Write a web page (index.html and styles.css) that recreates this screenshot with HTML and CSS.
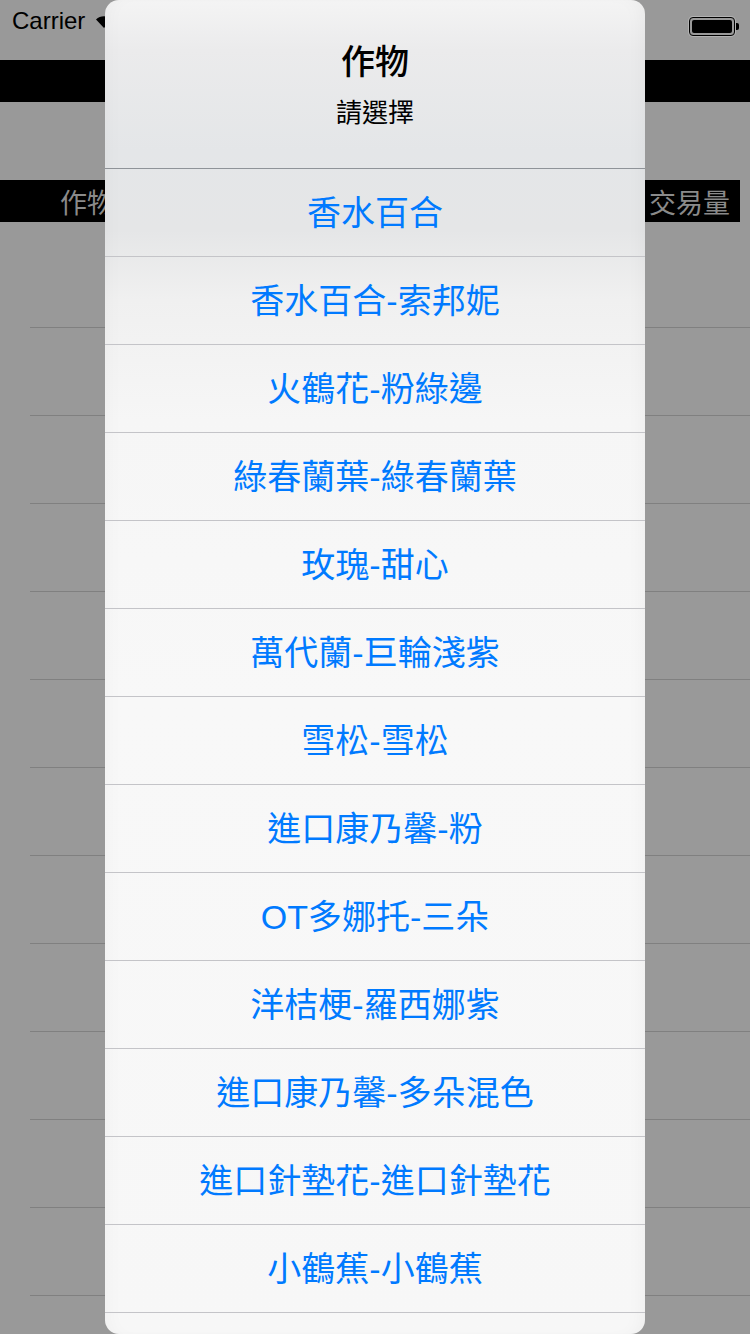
FILE: index.html
```html
<!DOCTYPE html>
<html lang="zh-Hant">
<head>
<meta charset="utf-8">
<title>作物</title>
<link rel="stylesheet" href="styles.css">
</head>
<body>
<div class="screen">
  <div class="page">
    <div class="statusbar">
      <span class="carrier">Carrier</span>
      <svg class="wifi" width="18" height="14" viewBox="0 0 18 14"><path d="M9 13 L1 4.5 A11.5 11.5 0 0 1 17 4.5 Z" fill="#000"/></svg>
      <span class="spacer"></span>
      <span class="battery"><span class="battery-fill"></span></span>
      <span class="battery-nub"></span>
    </div>
    <div class="navbar"></div>
    <div class="table-head">
      <span class="col-name">作物</span>
      <span class="col-vol">交易量</span>
    </div>
    <div class="rows">
      <div class="row first"></div>
      <div class="row"></div><div class="row"></div><div class="row"></div>
      <div class="row"></div><div class="row"></div><div class="row"></div>
      <div class="row"></div><div class="row"></div><div class="row"></div>
      <div class="row"></div><div class="row"></div>
    </div>
  </div>

  <div class="alert">
    <div class="alert-head">
      <div class="alert-title">作物</div>
      <div class="alert-msg">請選擇</div>
    </div>
    <div class="alert-list">
      <div class="item">香水百合</div>
      <div class="item">香水百合-索邦妮</div>
      <div class="item">火鶴花-粉綠邊</div>
      <div class="item">綠春蘭葉-綠春蘭葉</div>
      <div class="item">玫瑰-甜心</div>
      <div class="item">萬代蘭-巨輪淺紫</div>
      <div class="item">雪松-雪松</div>
      <div class="item">進口康乃馨-粉</div>
      <div class="item">OT多娜托-三朵</div>
      <div class="item">洋桔梗-羅西娜紫</div>
      <div class="item">進口康乃馨-多朵混色</div>
      <div class="item">進口針墊花-進口針墊花</div>
      <div class="item">小鶴蕉-小鶴蕉</div>
    </div>
  </div>
</div>
</body>
</html>
```

FILE: styles.css
```css
* { box-sizing: border-box; }
html, body {
  margin: 0;
  padding: 0;
  width: 750px;
  height: 1334px;
  overflow: hidden;
  background: #999999;
  font-family: "Liberation Sans", "Noto Sans CJK TC", sans-serif;
}
.screen {
  position: relative;
  width: 750px;
  height: 1334px;
  overflow: hidden;
}
.page {
  display: flex;
  flex-direction: column;
  width: 750px;
  height: 1334px;
  background: #999999;
}
.statusbar {
  height: 60px;
  display: flex;
  align-items: flex-start;
  padding: 6px 0 0 12px;
}
.carrier {
  font-size: 24px;
  line-height: 30px;
  color: #000;
}
.wifi {
  margin: 9px 0 0 10px;
}
.spacer { flex: 1; }
.battery {
  margin-top: 11px;
  width: 46px;
  height: 19px;
  border: 1.5px solid #000;
  border-radius: 4px;
  padding: 2px;
  display: flex;
  box-shadow: 0 0 0 1px rgba(255,255,255,0.25);
}
.battery-fill {
  flex: 1;
  background: #000;
  border-radius: 2px;
}
.battery-nub {
  margin: 17px 11px 0 1px;
  width: 3px;
  height: 7px;
  background: #000;
  border-radius: 0 2px 2px 0;
}
.navbar {
  height: 42px;
  background: #000;
}
.table-head {
  margin-top: 78px;
  height: 42px;
  width: 740px;
  background: #000;
  display: flex;
  justify-content: space-between;
  align-items: center;
  padding: 0 10px 0 60px;
  color: #8a8a8a;
  font-size: 27px;
  font-family: "Noto Sans CJK TC", sans-serif;
}
.rows {
  display: flex;
  flex-direction: column;
}
.row {
  height: 88px;
  margin-left: 30px;
  border-bottom: 1px solid #808080;
}
.row.first {
  height: 106px;
}

.alert {
  position: absolute;
  left: 105px;
  top: 0;
  width: 540px;
  height: 1334px;
  border-radius: 14px;
  overflow: hidden;
  background: linear-gradient(to bottom, #f4f4f4 0px, #ebebec 50px, #e4e6e8 150px, #e5e6e7 230px, #f0f0f0 300px, #f6f6f6 420px, #f8f8f8 700px, #f7f7f7 1334px);
  box-shadow: inset 12px 0 20px -12px rgba(0,0,0,0.04), inset -12px 0 20px -12px rgba(0,0,0,0.05);
  display: flex;
  flex-direction: column;
}
.alert-head {
  height: 169px;
  border-bottom: 1px solid #8f9398;
  display: flex;
  flex-direction: column;
  align-items: center;
  padding-top: 40px;
  font-family: "Noto Sans CJK TC", sans-serif;
  color: #000;
}
.alert-title {
  font-size: 34px;
  font-weight: 500;
  line-height: 40px;
}
.alert-msg {
  margin-top: 16px;
  font-size: 26px;
  line-height: 30px;
}
.alert-list {
  display: flex;
  flex-direction: column;
}
.item {
  height: 88px;
  border-bottom: 1px solid #c4c4c8;
  display: flex;
  align-items: center;
  justify-content: center;
  color: #007aff;
  font-size: 34px;
  line-height: 40px;
}
```
